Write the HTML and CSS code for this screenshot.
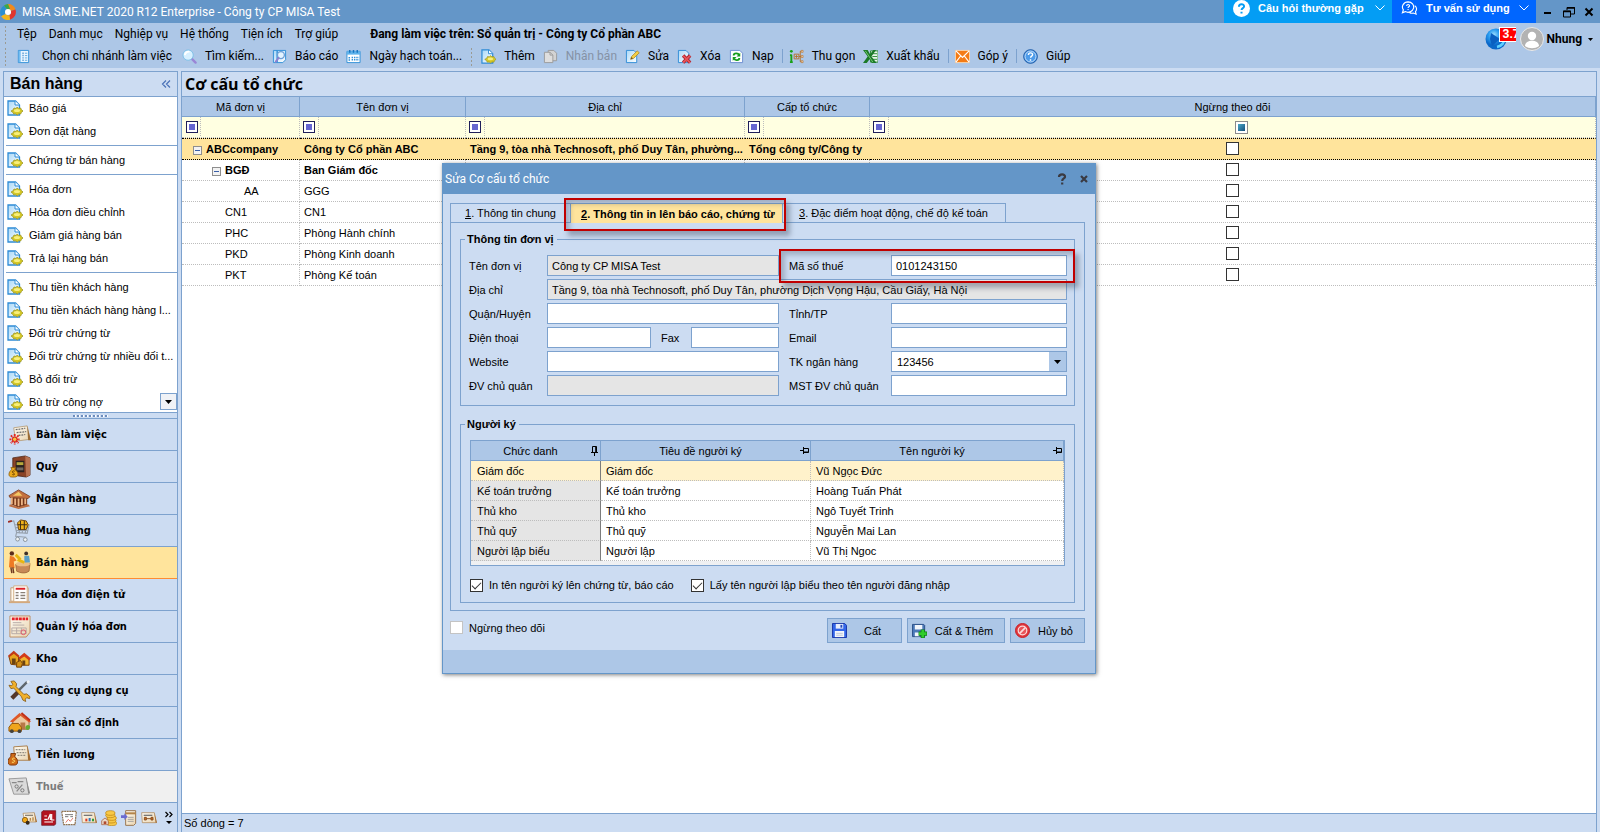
FILE: index.html
```html
<!DOCTYPE html>
<html lang="vi">
<head>
<meta charset="utf-8">
<title>MISA SME.NET 2020 R12 Enterprise - Công ty CP MISA Test</title>
<link rel="stylesheet" href="styles.css">
</head>
<body>
<svg class="defs" aria-hidden="true">
  <defs>
    <linearGradient id="page" x1="0" y1="0" x2="1" y2="1"><stop offset="0" stop-color="#a9d8f8"/><stop offset="1" stop-color="#fff"/></linearGradient>
    <radialGradient id="globe" cx=".4" cy=".3"><stop offset="0" stop-color="#9fe0ff"/><stop offset=".5" stop-color="#2a9cf0"/><stop offset="1" stop-color="#0a67c8"/></radialGradient>
    <linearGradient id="paper" x1="0" y1="0" x2="1" y2="1"><stop offset="0" stop-color="#fffdf6"/><stop offset="1" stop-color="#e9d3ae"/></linearGradient>
    <symbol id="logo" viewBox="0 0 16 16"><path d="M8 0a8 8 0 0 1 7.500 5.500L10.500 7A3 3 0 0 0 8 5L4 2.500A8 8 0 0 1 8 0z" fill="#f28a1c"/><path d="M15.500 5.500A8 8 0 0 1 10 15.700L9 11a3 3 0 0 0 1.800-4z" fill="#e0362f"/><path d="M10 15.700A8 8 0 0 1 1 12l5-2a3 3 0 0 0 3.500 1z" fill="#f2b61c"/><path d="M1 12A8 8 0 0 1 4 1.500L7 5a3 3 0 0 0-1.500 4.500z" fill="#2b8fd0"/><path d="M4 1.500A8 8 0 0 1 8 0l2 5-3 .2z" fill="#3aa94a"/><circle cx="8" cy="8" r="3" fill="#fff"/></symbol>
    <symbol id="doc" viewBox="0 0 16 16"><path d="M1 1h7.500l4 4v10H1z" fill="url(#page)" stroke="#2f8cd6" stroke-width="1.300"/><path d="M8 1v4h4.500" fill="#fff" stroke="#2f8cd6"/><path d="M4 11l2-1 1-2 2 .500L10.200 7l1.500 1.500 2-.500.600 1.500 1.700 1.500-1.700 1.500-.600 1.500-2-.200-1.500 1.200-1.500-1.200-2 .200-.700-1.500z" fill="#d5c825" stroke="#9c9528" stroke-width=".8"/><ellipse cx="10" cy="10.600" rx="3" ry="1.500" fill="#f8ef7c"/></symbol>
    <symbol id="book" viewBox="0 0 16 16"><path d="M2.500 1.500h11v13h-11z" fill="#e8f5ff" stroke="#2f8fd8"/><path d="M3 2h2v12H3z" fill="#74bdf0"/><path d="M7 4.500h1M7 7h1M7 9.500h1M7 12h1" stroke="#1673bf" stroke-width="1.500"/><path d="M9.500 4.500h2.500M9.500 7h2.500M9.500 9.500h2.500M9.500 12h2.500" stroke="#5fa9dc"/></symbol>
    <symbol id="find" viewBox="0 0 16 16"><path d="M10.500 10.500l4 4" stroke="#9a86d6" stroke-width="2.500" stroke-linecap="round"/><circle cx="6.500" cy="6.500" r="5.500" fill="#d7f0ff" stroke="#7bbfe6"/><path d="M3 6.500a4 4 0 0 1 5-3.500" stroke="#fff" stroke-width="2" fill="none"/></symbol>
    <symbol id="report" viewBox="0 0 16 16"><path d="M1.500 1.500h4v13h-4zM5.500 1.500h9v10l-3 3h-6z" fill="url(#page)" stroke="#2f8fd8"/><circle cx="9.500" cy="6.500" r="3.700" fill="#e4f4ff" stroke="#6d9fd6" stroke-width="1.400"/><path d="M7 9.500l-3 4" stroke="#8f80d0" stroke-width="2" stroke-linecap="round"/></symbol>
    <symbol id="cal" viewBox="0 0 16 16"><path d="M1 2.500h14v12H1z" fill="#fff" stroke="#2f8fd8"/><path d="M1 2.500h14v3.500H1z" fill="#5db3ec"/><path d="M4 1v3M8 1v3M12 1v3" stroke="#1673bf" stroke-width="1.500"/><path d="M3.500 8.500v4M6 9h8M6 11.500h8" stroke="#2f8fd8" stroke-width="1.600" stroke-dasharray="1.500 1"/></symbol>
    <symbol id="copy" viewBox="0 0 16 16"><path d="M5.500 1.500h6l3 3v8h-9z" fill="#d3d3d3" stroke="#9b9b9b"/><path d="M1.500 3.500h6l3 3v8h-9z" fill="#dedede" stroke="#9b9b9b"/><path d="M7.500 3.500v3h3" fill="none" stroke="#9b9b9b"/></symbol>
    <symbol id="edit" viewBox="0 0 16 16"><path d="M1.500 1.500h8l3 3v10h-11z" fill="url(#page)" stroke="#2f8cd6"/><path d="M6 11l1-3 6-6 2.200 2-6 6z" fill="#f5cf45" stroke="#a98620" stroke-width=".8"/><path d="M6 11l1-2.500 1.500 1.500z" fill="#6b4d1c"/></symbol>
    <symbol id="del" viewBox="0 0 16 16"><path d="M1.500 1.500h8l3 3v10h-11z" fill="url(#page)" stroke="#2f8cd6"/><path d="M6.500 7l7.500 7.500M14 7l-7.500 7.500" stroke="#a51f28" stroke-width="3.600"/><path d="M6.500 7l7.500 7.500M14 7l-7.500 7.500" stroke="#e8545c" stroke-width="2"/></symbol>
    <symbol id="reload" viewBox="0 0 16 16"><path d="M1.500 1.500h10l3 3v10h-13z" fill="#fbfdff" stroke="#6b8cd0"/><path d="M5 7c0-3 5-3 5.500-.5M11 9.500c0 3-5 3-5.500.5" fill="none" stroke="#169c1c" stroke-width="2"/><path d="M12 4v4H8zM4 12.500v-4h4z" fill="#169c1c"/></symbol>
    <symbol id="tree" viewBox="0 0 16 16"><path d="M2.500 6v8M1 6.500h2M1 14h3" stroke="#18a018" stroke-width="2"/><circle cx="2.500" cy="2.500" r="1.500" fill="#18a018"/><path d="M5.500 5.500h5v5h-5zM6.500 8h3M8 6.500v3M10.500 8H13M12 8V2.500h1.500M12 8v5.500h1.500" fill="none" stroke="#b5702a"/><path d="M13 1.500h2v2h-2zM13 7h2v2h-2zM13 12.500h2v2h-2z" fill="#f8e6c8" stroke="#b5702a" stroke-width=".7"/></symbol>
    <symbol id="excel" viewBox="0 0 16 16"><path d="M8 2h8v12H8z" fill="#e9f5e9" stroke="#2a8a36"/><path d="M10 5h5M10 8h5M10 11h5" stroke="#2a8a36"/><path d="M0 1h5l2.500 4.500L11 1h3L9 8l5.500 7h-5L7 11l-3 4H0l5-7z" fill="#1c7a28"/><path d="M2.500 2l8 12" stroke="#79cc74"/></symbol>
    <symbol id="mail" viewBox="0 0 16 16"><path d="M.5 1.500h15v13H.5z" fill="#f47b14" stroke="#fbd5ae"/><path d="M1 2l7 7 7-7M1 14l5-6.500M15 14l-5-6.500" fill="none" stroke="#fff" stroke-width="1.200"/></symbol>
    <symbol id="help" viewBox="0 0 16 16"><circle cx="8" cy="8" r="7.300" fill="#2a7ad0" stroke="#1a5aa8"/><circle cx="8" cy="8" r="5.900" fill="#4e9cea" stroke="#d6eaff"/><path d="M5.800 6.300c0-3 4.600-2.800 4.400-.2-.1 1.500-2.100 1.600-2.100 3.200M8 10.800v1.600" fill="none" stroke="#fff" stroke-width="1.500"/></symbol>
    <symbol id="ask" viewBox="0 0 16 16"><circle cx="8" cy="8" r="8" fill="#fff"/><path d="M5.600 6.300c0-3.200 5-3 4.800-.2-.1 1.600-2.300 1.600-2.300 3.300M8 11v1.800" fill="none" stroke="#049df4" stroke-width="1.900"/></symbol>
    <symbol id="chat" viewBox="0 0 18 16"><path d="M7.500 1a6 5.500 0 1 1-3 10.300L1.500 12.500l1-3A6 5.500 0 0 1 7.500 1zM14.500 5c2.500 2 2.500 4.500.8 6.300l.7 2.700-3-1.200c-1.500.5-3 .2-4-.5" fill="none" stroke="#fff" stroke-width="1.200"/><path d="M6 5.300c0-2 3.200-1.900 3-.1-.1 1-1.500 1-1.500 2.200M7.500 8.500v1.200" fill="none" stroke="#fff" stroke-width="1.200"/></symbol>
    <symbol id="down" viewBox="0 0 10 6"><path d="M.5.5L5 5 9.500.5" fill="none" stroke="currentColor"/></symbol>
    <symbol id="caret" viewBox="0 0 7 4"><path d="M0 0h7L3.500 4z" fill="currentColor"/></symbol>
    <symbol id="pin" viewBox="0 0 10 9"><path d="M0 4.500h3M3.500 1v7M3.500 2.500h5v4h-5M3.500 6h5" fill="none" stroke="#000"/></symbol>
    <symbol id="pinned" viewBox="0 0 9 10"><path d="M4.500 6.500V10M1 6.500h7M2.500 6V.5h4V6M5.700.5V6" fill="none" stroke="#000"/></symbol>

    <symbol id="desk" viewBox="0 0 24 24"><path d="M6 5l14-2 3 14-15 2z" fill="url(#paper)" stroke="#a98a5c" stroke-width=".7"/><path d="M20 3l4 15h-3z" fill="#9b6b35"/><path d="M8 7l10-1.500M9 10l10-1M11 13l7-1" stroke="#6a6a6a" stroke-width="1.300" stroke-dasharray="2 1"/><g stroke="#e3261f" stroke-width="1.900" stroke-dasharray="2 .600"><path d="M7 11.500v11M1.500 17h11M3 13l8 8M11 13l-8 8"/></g><circle cx="7" cy="17" r="2.300" fill="#f8c33c" stroke="#d1261f"/></symbol>
    <symbol id="safe" viewBox="0 0 24 24"><path d="M5 3l13-2 5 2v18l-4 2-14-2z" fill="#8a4326" stroke="#4d2413" stroke-width=".8"/><path d="M18 1l5 2v18l-4 2z" fill="#b87352"/><path d="M8 6h9v12H8z" fill="#2a2220"/><path d="M9 7.500h7v3H9z" fill="#b6a83c"/><path d="M9 13h7v3H9z" fill="#70675f"/><path d="M3 13h5l-1 2c5 3 4 8 0 8H4c-4 0-4-5 0-8z" fill="#eaa91e" stroke="#8b5b09" stroke-width=".8"/><path d="M7 17c-2-1.500-3.500 1-1.500 1.700s1.500 2.800-1 1.700" fill="none" stroke="#623b00"/></symbol>
    <symbol id="bank" viewBox="0 0 24 24"><path d="M1 9L11 3l12 7-2 2-19-1z" fill="#c4703f" stroke="#783515" stroke-width=".8"/><path d="M5 9l6-4 4 4z" fill="#f3c764"/><path d="M3 11l17 1v8L10 21 3 18z" fill="#743517"/><path d="M4 11v7M7.500 12v7M11 12v8M14.500 12v7M18 12v6" stroke="#edb485" stroke-width="1.900"/><path d="M2 18l9 3 10-3 2 2-12 3L1 20z" fill="#be6e42"/></symbol>
    <symbol id="cart" viewBox="0 0 24 24"><path d="M1 3l5-1 3 12 11 1 2-9H7M8 9h13M9 12h12M11 6l1 9M15 6v9M19 6l-1 9M9 14l-1 4 11 1" fill="none" stroke="#98a2ae" stroke-width="1.200"/><path d="M0 3l4-1" stroke="#a02c22" stroke-width="2"/><path d="M10 4l3-3 6 1 2 4-2 5h-8z" fill="#f0b21b" stroke="#70430b"/><path d="M13 2v9M17 2v9M10 6h10" stroke="#392815"/><circle cx="10" cy="21" r="2" fill="#eef2f5" stroke="#88929c"/><circle cx="18" cy="21.500" r="2" fill="#eef2f5" stroke="#88929c"/></symbol>
    <symbol id="sell" viewBox="0 0 24 24"><path d="M8 14l15-1-1 8c-4 3-9 2-13 0z" fill="#c78957" stroke="#925a2d" stroke-width=".7"/><ellipse cx="15.500" cy="13.500" rx="7.500" ry="2.500" fill="#ebbd83"/><circle cx="4" cy="2.500" r="2.300" fill="#5b2c1b"/><path d="M2 5l4 1 3 4-3 1 1 7-6-1z" fill="#ee7a24"/><path d="M5 17l1 6M3 17l1 6" stroke="#713a22" stroke-width="1.500"/><circle cx="19" cy="2.500" r="2" fill="#3f3027"/><path d="M17 5h5l1 7-6 0z" fill="#5a9fc8"/><path d="M8 4l5 5M10 9l7 3" stroke="#e7b610" stroke-width="3"/></symbol>
    <symbol id="einv" viewBox="0 0 24 24"><path d="M3 5h18v14H3z" fill="#fffaf0" stroke="#c79e72"/><path d="M6 3h14v17H6z" fill="#fff" stroke="#d0ad83"/><path d="M8 6h10" stroke="#dd1f25" stroke-width="2"/><path d="M8 10h3M13 10h5M8 13h3M13 13h5M8 16h3M13 16h5" stroke="#8a8177" stroke-width="1.400"/><path d="M1 19h22v2H1z" fill="#d4a97d"/></symbol>
    <symbol id="inv" viewBox="0 0 24 24"><path d="M2 1h21v17l-4 5H2z" fill="url(#paper)" stroke="#bd8d62"/><path d="M4 4h17" stroke="#e52127" stroke-width="3" stroke-dasharray="3 .7"/><path d="M5 8h9M5 10.500h12M4 13.500h15v6H4zM9 13.500v6M14 13.500v6M4 16.500h15" fill="none" stroke="#b7aaa6"/><circle cx="16" cy="18" r="2.500" fill="none" stroke="#e45869"/></symbol>
    <symbol id="store" viewBox="0 0 24 24"><path d="M1 10l5-4 5 4v9l-8-1z" fill="#e8a41e" stroke="#7a3e07"/><path d="M0 9l6-5 6 5-1 2-5-4-5 4z" fill="#c23b19"/><path d="M12 12l5-4 5 5v6h-9z" fill="#f0b42f" stroke="#7a3e07"/><path d="M11 11l6-5 7 6-2 2-5-4-5 3z" fill="#d33a1a"/><path d="M4 12h4v6H4zM15 14h3v5h-3z" fill="#6b4212"/><path d="M9 16l4-2 2 3-1 4H9z" fill="#d29018" stroke="#754005"/></symbol>
    <symbol id="tools" viewBox="0 0 24 24"><path d="M9 14L20 3" stroke="#5f666c" stroke-width="2.500"/><path d="M20 4l2-2" stroke="#eef1f4" stroke-width="2.500"/><path d="M4 20l6-6" stroke="#54372a" stroke-width="4.500"/><path d="M3 2.500l3.500-.5L9 5l-.5 3 8 8 3-.5L23 18.500l-.5 2-3-1-1.500 1.500.5 2.500-3-1.500-1.500-3.500-8-9-3 .5L1 6.500l3 .5 1-1.500z" fill="#f0b02c" stroke="#83550d" stroke-width=".8"/></symbol>
    <symbol id="asset" viewBox="0 0 24 24"><path d="M5 10L14 4l8 7v8H5z" fill="#ecc9a0" stroke="#a16540"/><path d="M2 11L12 2l12 9-2 1-9-7-8 7z" fill="#df5828"/><path d="M14 2l9 8" stroke="#c22e15" stroke-width="2"/><path d="M13 12h5v7h-5z" fill="#b97848"/><path d="M1 17l3-4h7l3 4v4H1z" fill="#efa51c" stroke="#91550a"/><circle cx="4" cy="21" r="2" fill="#44413c"/><circle cx="12" cy="21" r="2" fill="#44413c"/><path d="M18 18c0-5 6-4 5-1-1 3-3 4-5 1z" fill="#64ac30"/></symbol>
    <symbol id="pay" viewBox="0 0 24 24"><path d="M6 4l14-1 3 15H7z" fill="url(#paper)" stroke="#a97e4c"/><path d="M20 3l4 15h-3z" fill="#a46b2f"/><path d="M8 7h10M9 10h10M10 13h9" stroke="#918b80" stroke-width="1.300" stroke-dasharray="2 1"/><path d="M3 11h5l-1 3c4 3 4 9 0 9H3c-4 0-4-6 0-9z" fill="#cf6b18" stroke="#7d360a"/><path d="M7 16c-3-1-3 2-1 2s1 3-2 2" fill="none" stroke="#ffe06d"/></symbol>
    <symbol id="tax" viewBox="0 0 24 24"><path d="M1 4l18-1 3 17H6z" fill="#dadada" stroke="#999"/><path d="M19 3l4 16h-2z" fill="#8d8d8d"/><path d="M4 8h5M10 7h6M9 17l6-7" stroke="#888" stroke-width="1.300"/><circle cx="9" cy="12" r="1.700" fill="none" stroke="#777"/><circle cx="15" cy="16" r="1.700" fill="none" stroke="#777"/></symbol>
    <symbol id="costs" viewBox="0 0 24 24"><path d="M3 5l17-1 3 14H6z" fill="url(#paper)" stroke="#a97e4c"/><path d="M20 4l4 14h-2z" fill="#a46b2f"/><path d="M6 8h12" stroke="#8b8478" stroke-width="2"/><path d="M14 16v-4M18 16v-5" stroke="#b98a4a" stroke-width="2"/><circle cx="6" cy="15" r="4" fill="#f0a818" stroke="#6b4208"/><circle cx="10" cy="19" r="3" fill="#3a2a18"/></symbol>
    <symbol id="coins" viewBox="0 0 24 24"><g fill="#f8c845" stroke="#b9800f"><ellipse cx="16" cy="20" rx="7.500" ry="3.500"/><ellipse cx="15" cy="16" rx="7.500" ry="3.500"/><ellipse cx="16" cy="12" rx="7" ry="3.500"/><ellipse cx="14" cy="8" rx="7" ry="3.500"/><ellipse cx="14" cy="4.500" rx="7" ry="3.500"/></g><path d="M1 22v-6l5-4 5 4v6z" fill="#e9d9c8" stroke="#a3502a"/><path d="M4 17h4v4H4z" fill="#b04a2e"/></symbol>
    <symbol id="redbook" viewBox="0 0 24 24"><path d="M3 1h19v20l-2 2H1V3z" fill="#b31420" stroke="#67101a"/><path d="M5 9h4M5 14h4" stroke="#fff" stroke-width="1.800"/><path d="M10 15l4-9v9M16 6v9h4M5 18h13" fill="none" stroke="#fff" stroke-width="1.800"/></symbol>
    <symbol id="sheet" viewBox="0 0 24 24"><path d="M1 2h22l-2 20H4z" fill="#fff" stroke="#917452" stroke-width="1.800" stroke-dasharray="3 .8"/><path d="M6 7h12M6 10h5M14 10h4" stroke="#777" stroke-width="1.500"/><path d="M7 19l4-5 3 3 4-5" fill="none" stroke="#e07d72" stroke-width="1.500"/></symbol>
    <symbol id="chart" viewBox="0 0 24 24"><path d="M1 4h19l3 15H2z" fill="url(#paper)" stroke="#a97e4c"/><path d="M20 4l4 15h-2z" fill="#a46b2f"/><path d="M4 8h13" stroke="#777" stroke-width="2"/><path d="M8 17v-4" stroke="#dd3926" stroke-width="3"/><path d="M13 17v-5" stroke="#337ac0" stroke-width="3"/><path d="M18 17v-4" stroke="#2f9e40" stroke-width="3"/></symbol>
    <symbol id="scroll" viewBox="0 0 24 24"><path d="M7 1h15v19l-3 3H7z" fill="url(#paper)" stroke="#997650" stroke-width="1.500"/><path d="M7 5h15" stroke="#b3844a" stroke-width="3"/><path d="M10 11h9M10 14h9M10 17h9" stroke="#999" stroke-width="1.300"/><path d="M0 8h5V5l5 5-5 5v-3H0z" fill="#6a6ad0"/></symbol>
    <symbol id="merge" viewBox="0 0 24 24"><path d="M1 4h19l3 15H2z" fill="url(#paper)" stroke="#a97e4c"/><path d="M20 4l4 15h-2z" fill="#a46b2f"/><path d="M4 8h13" stroke="#777" stroke-width="2"/><path d="M5 11h3v4H5zM15 11h3v4h-3zM8 13h7" fill="#c0702c" stroke="#8a4b1c" stroke-width="1.400"/></symbol>
    <symbol id="save" viewBox="0 0 16 16"><path d="M.5.500h13l2 2v13H.5z" fill="#3366e8" stroke="#1533a8"/><path d="M4 1h8v5H4z" fill="#e8eefc"/><path d="M9 2h2v3H9z" fill="#2448b8"/><path d="M3 8.500h10V15H3z" fill="#f4f6fa"/><path d="M4.500 11h7M4.500 13h7" stroke="#b9c3d6"/></symbol>
    <symbol id="saveadd" viewBox="0 0 16 16"><path d="M.5 1.500h12l1 1v12H.5z" fill="#4b79b8" stroke="#2a4e86"/><path d="M3 2h8v5H3zM3 10h5v4H3z" fill="#f1f5fb"/><path d="M7 11.300h9M11.500 7v9" stroke="#0b7c12" stroke-width="4.400"/><path d="M7.500 11.300h8M11.500 7.500v8" stroke="#2fcc2c" stroke-width="2.900"/></symbol>
    <symbol id="cancel" viewBox="0 0 16 16"><circle cx="8" cy="8" r="7.500" fill="#e0363b" stroke="#c81d24"/><circle cx="8" cy="8" r="4.600" fill="#e8555a" stroke="#fbdcdc" stroke-width="1.300"/><path d="M5 11l6-6" stroke="#fbdcdc" stroke-width="1.800"/></symbol>
  </defs>
</svg>

<div class="app">
  <header class="titlebar">
    <svg class="logo"><use href="#logo"/></svg>
    <h1 class="window-title">MISA SME.NET 2020 R12 Enterprise - Công ty CP MISA Test</h1>
    <button class="promo promo-faq"><svg class="i17"><use href="#ask"/></svg><span>Câu hỏi thường gặp</span><svg class="chev"><use href="#down"/></svg></button>
    <button class="promo promo-chat"><svg class="i17"><use href="#chat"/></svg><span>Tư vấn sử dụng</span><svg class="chev"><use href="#down"/></svg></button>
    <div class="window-buttons">
      <button aria-label="Thu nhỏ"><svg class="i12" viewBox="0 0 12 12"><path d="M2 7h7" stroke="#000" stroke-width="2"/></svg></button>
      <button aria-label="Khôi phục"><svg class="i12" viewBox="0 0 12 12"><path d="M4 4V1.500h7.500V8H8M.5 5h7v6h-7z" fill="none" stroke="#000"/><path d="M4 2h8M0 5.500h8" stroke="#000" stroke-width="1.500"/></svg></button>
      <button aria-label="Đóng"><svg class="i12" viewBox="0 0 12 12"><path d="M2.500 2.500l7 7M9.500 2.500l-7 7" stroke="#000" stroke-width="2"/></svg></button>
    </div>
  </header>

  <div class="topbar">
    <div class="bars">
      <nav class="menubar">
        <i class="grip"></i>
        <button>Tệp</button><button>Danh mục</button><button>Nghiệp vụ</button><button>Hệ thống</button><button>Tiện ích</button><button>Trợ giúp</button>
        <strong class="context">Đang làm việc trên: Sổ quản trị - Công ty Cổ phần ABC</strong>
      </nav>
      <div class="toolbar">
        <i class="grip"></i>
        <button class="branch"><svg class="i15"><use href="#book"/></svg>Chọn chi nhánh làm việc</button>
        <button><svg class="i15"><use href="#find"/></svg>Tìm kiếm...</button>
        <button><svg class="i15"><use href="#report"/></svg>Báo cáo</button>
        <button><svg class="i15"><use href="#cal"/></svg>Ngày hạch toán...</button>
        <i class="grip"></i>
        <button><svg class="i15"><use href="#doc"/></svg>Thêm</button>
        <button disabled><svg class="i15"><use href="#copy"/></svg>Nhân bản</button>
        <button><svg class="i15"><use href="#edit"/></svg>Sửa</button>
        <button><svg class="i15"><use href="#del"/></svg>Xóa</button>
        <button><svg class="i15"><use href="#reload"/></svg>Nạp</button>
        <i class="rule"></i>
        <button><svg class="i15"><use href="#tree"/></svg>Thu gọn</button>
        <button><svg class="i15"><use href="#excel"/></svg>Xuất khẩu</button>
        <i class="rule"></i>
        <button><svg class="i15"><use href="#mail"/></svg>Góp ý</button>
        <i class="rule"></i>
        <button><svg class="i15"><use href="#help"/></svg>Giúp</button>
      </div>
    </div>
    <div class="account">
      <div class="news">
        <svg class="globe" viewBox="0 0 22 22"><circle cx="11" cy="11" r="10.500" fill="url(#globe)"/><path d="M6 5l9 6-8 7-2-7z" fill="#0a5fc0"/><path d="M12 19c5-1 8-5 7-9" stroke="#5fd0ff" stroke-width="2.500" fill="none"/></svg>
        <span class="badge">3.7</span>
      </div>
      <button class="user">
        <svg class="avatar" viewBox="0 0 24 24"><circle cx="12" cy="12" r="11.500" fill="#b3b3b3" stroke="#e9e9e9"/><circle cx="12" cy="9" r="4.200" fill="#fff"/><path d="M5 19c0-7 14-7 14 0-4 3-10 3-14 0z" fill="#fff"/></svg>
        Nhung<svg class="caret"><use href="#caret"/></svg>
      </button>
    </div>
  </div>

  <div class="workspace">
    <aside class="sidebar">
      <h2 class="side-title">Bán hàng<button class="collapse" aria-label="Thu gọn"><svg class="i10" viewBox="0 0 10 10"><path d="M5 1.500L1.500 5 5 8.500M9 1.500L5.500 5 9 8.500" fill="none" stroke="#4a72b8" stroke-width="1.200"/></svg></button></h2>
      <div class="side-list">
        <a href="#bao-gia"><svg class="i16"><use href="#doc"/></svg><span>Báo giá</span></a>
        <a href="#don-dat"><svg class="i16"><use href="#doc"/></svg><span>Đơn đặt hàng</span></a>
        <hr>
        <a href="#chung-tu"><svg class="i16"><use href="#doc"/></svg><span>Chứng từ bán hàng</span></a>
        <hr>
        <a href="#hoa-don"><svg class="i16"><use href="#doc"/></svg><span>Hóa đơn</span></a>
        <a href="#dieu-chinh"><svg class="i16"><use href="#doc"/></svg><span>Hóa đơn điều chỉnh</span></a>
        <a href="#giam-gia"><svg class="i16"><use href="#doc"/></svg><span>Giảm giá hàng bán</span></a>
        <a href="#tra-lai"><svg class="i16"><use href="#doc"/></svg><span>Trả lại hàng bán</span></a>
        <hr>
        <a href="#thu-tien"><svg class="i16"><use href="#doc"/></svg><span>Thu tiền khách hàng</span></a>
        <a href="#thu-tien-loat"><svg class="i16"><use href="#doc"/></svg><span>Thu tiền khách hàng hàng l...</span></a>
        <a href="#doi-tru"><svg class="i16"><use href="#doc"/></svg><span>Đối trừ chứng từ</span></a>
        <a href="#doi-tru-nhieu"><svg class="i16"><use href="#doc"/></svg><span>Đối trừ chứng từ nhiều đối t...</span></a>
        <a href="#bo-doi-tru"><svg class="i16"><use href="#doc"/></svg><span>Bỏ đối trừ</span></a>
        <a href="#bu-tru"><svg class="i16"><use href="#doc"/></svg><span>Bù trừ công nợ</span></a>
        <button class="scroll-down" aria-label="Cuộn xuống"><svg class="caret"><use href="#caret"/></svg></button>
      </div>
      <div class="splitter"><i></i></div>
      <nav class="modules">
        <button><svg class="i23"><use href="#desk"/></svg>Bàn làm việc</button>
        <button><svg class="i23"><use href="#safe"/></svg>Quỹ</button>
        <button><svg class="i23"><use href="#bank"/></svg>Ngân hàng</button>
        <button><svg class="i23"><use href="#cart"/></svg>Mua hàng</button>
        <button class="active"><svg class="i23"><use href="#sell"/></svg>Bán hàng</button>
        <button><svg class="i23"><use href="#einv"/></svg>Hóa đơn điện tử</button>
        <button><svg class="i23"><use href="#inv"/></svg>Quản lý hóa đơn</button>
        <button><svg class="i23"><use href="#store"/></svg>Kho</button>
        <button><svg class="i23"><use href="#tools"/></svg>Công cụ dụng cụ</button>
        <button><svg class="i23"><use href="#asset"/></svg>Tài sản cố định</button>
        <button><svg class="i23"><use href="#pay"/></svg>Tiền lương</button>
        <button disabled><svg class="i23"><use href="#tax"/></svg>Thuế</button>
      </nav>
      <div class="shortcuts">
        <button aria-label="Giá thành"><svg class="i16"><use href="#costs"/></svg></button>
        <button aria-label="Sổ cái"><svg class="i16"><use href="#redbook"/></svg></button>
        <button aria-label="Hợp đồng"><svg class="i16"><use href="#sheet"/></svg></button>
        <button aria-label="Báo cáo"><svg class="i16"><use href="#chart"/></svg></button>
        <button aria-label="Ngân sách"><svg class="i16"><use href="#coins"/></svg></button>
        <button aria-label="Tài liệu"><svg class="i16"><use href="#scroll"/></svg></button>
        <button aria-label="Tổng hợp"><svg class="i16"><use href="#merge"/></svg></button>
        <button class="more" aria-label="Thêm mục"><svg viewBox="0 0 8 14"><path d="M.5 1l2.500 2.500L.5 6M4.500 1L7 3.500 4.500 6" fill="none" stroke="#000" stroke-width="1.200"/><path d="M1 10h6l-3 3z"/></svg></button>
      </div>
    </aside>

    <main class="content">
      <h2 class="page-title">Cơ cấu tổ chức</h2>
      <div class="grid-wrap">
        <table class="grid">
          <colgroup><col class="c-code"><col class="c-name"><col class="c-addr"><col class="c-level"><col></colgroup>
          <thead>
            <tr><th>Mã đơn vị</th><th>Tên đơn vị</th><th>Địa chỉ</th><th>Cấp tổ chức</th><th>Ngừng theo dõi</th></tr>
            <tr class="filters">
              <td><button class="op" aria-label="Lọc mã"></button></td><td><button class="op" aria-label="Lọc tên"></button></td><td><button class="op" aria-label="Lọc địa chỉ"></button></td><td><button class="op" aria-label="Lọc cấp"></button></td>
              <td><div class="tri-cell"><button class="op" aria-label="Lọc trạng thái"></button><span><input type="checkbox" class="tri" aria-label="Ngừng theo dõi"></span></div></td>
            </tr>
          </thead>
          <tbody>
            <tr class="selected strong"><td class="l0"><button class="minus" aria-label="Thu gọn"></button>ABCcompany</td><td>Công ty Cổ phần ABC</td><td>Tầng 9, tòa nhà Technosoft, phố Duy Tân, phường...</td><td>Tổng công ty/Công ty</td><td class="mid"><input type="checkbox" aria-label="ABCcompany"></td></tr>
            <tr class="strong"><td class="l1"><button class="minus" aria-label="Thu gọn"></button>BGĐ</td><td>Ban Giám đốc</td><td></td><td></td><td class="mid"><input type="checkbox" aria-label="BGĐ"></td></tr>
            <tr><td class="l3">AA</td><td>GGG</td><td></td><td></td><td class="mid"><input type="checkbox" aria-label="AA"></td></tr>
            <tr><td class="l2">CN1</td><td>CN1</td><td></td><td></td><td class="mid"><input type="checkbox" aria-label="CN1"></td></tr>
            <tr><td class="l2">PHC</td><td>Phòng Hành chính</td><td></td><td></td><td class="mid"><input type="checkbox" aria-label="PHC"></td></tr>
            <tr><td class="l2">PKD</td><td>Phòng Kinh doanh</td><td></td><td></td><td class="mid"><input type="checkbox" aria-label="PKD"></td></tr>
            <tr><td class="l2">PKT</td><td>Phòng Kế toán</td><td></td><td></td><td class="mid"><input type="checkbox" aria-label="PKT"></td></tr>
          </tbody>
        </table>
      </div>
      <footer class="status">Số dòng = 7</footer>
    </main>
  </div>
</div>

<section class="dialog" role="dialog" aria-labelledby="dlg-title">
  <header class="dlg-head">
    <h3 id="dlg-title">Sửa Cơ cấu tổ chức</h3>
    <button class="dlg-help" aria-label="Trợ giúp"><svg class="i12" viewBox="0 0 12 12"><path d="M3 4c0-3.500 6.500-3.500 6 0C8.800 5.500 6.200 5.500 6.200 8M6.200 9.500v2" fill="none" stroke="#3a3a42" stroke-width="2.200"/></svg></button>
    <button aria-label="Đóng"><svg class="i12" viewBox="0 0 12 12"><path d="M3 3l6 6M9 3l-6 6" stroke="#3a3a42" stroke-width="2.200"/></svg></button>
  </header>
  <form class="dlg-body">
    <div class="tabs" role="tablist">
      <button type="button" role="tab"><span><u>1</u>. Thông tin chung</span></button>
      <button type="button" role="tab" class="current" aria-selected="true"><span><u>2</u>. Thông tin in lên báo cáo, chứng từ</span></button>
      <button type="button" role="tab"><span><u>3</u>. Đặc điểm hoạt động, chế độ kế toán</span></button>
      <i class="mark mark-tab"></i>
    </div>
    <div class="panel">
      <fieldset>
        <legend>Thông tin đơn vị</legend>
        <div class="fields">
          <label for="ten">Tên đơn vị</label><input id="ten" value="Công ty CP MISA Test" readonly>
          <label class="second" for="mst">Mã số thuế</label><input id="mst" value="0101243150">
          <label for="dc">Địa chỉ</label><input id="dc" class="span" value="Tầng 9, tòa nhà Technosoft, phố Duy Tân, phường Dịch Vọng Hậu, Cầu Giấy, Hà Nội" readonly>
          <label for="quan">Quận/Huyện</label><input id="quan">
          <label class="second" for="tinh">Tỉnh/TP</label><input id="tinh">
          <label for="dt">Điện thoại</label>
          <div class="phone"><input id="dt"><label class="second" for="fax">Fax</label><input id="fax"></div>
          <label class="second" for="email">Email</label><input id="email">
          <label for="web">Website</label><input id="web">
          <label class="second" for="tk">TK ngân hàng</label>
          <div class="combo"><select id="tk"><option>123456</option></select><i><svg class="caret"><use href="#caret"/></svg></i></div>
          <label for="dv">ĐV chủ quản</label><input id="dv" readonly>
          <label class="second" for="mstdv">MST ĐV chủ quản</label><input id="mstdv">
          <i class="mark mark-tax"></i>
        </div>
      </fieldset>
      <fieldset class="signers">
        <legend>Người ký</legend>
        <div class="sign-wrap">
          <table class="sign">
            <colgroup><col class="s-role"><col class="s-title"><col></colgroup>
            <thead><tr><th><div>Chức danh<svg class="pinned"><use href="#pinned"/></svg></div></th><th><div>Tiêu đề người ký<svg class="pin"><use href="#pin"/></svg></div></th><th><div>Tên người ký<svg class="pin"><use href="#pin"/></svg></div></th></tr></thead>
            <tbody>
              <tr class="on"><td>Giám đốc</td><td>Giám đốc</td><td>Vũ Ngọc Đức</td></tr>
              <tr><td>Kế toán trưởng</td><td>Kế toán trưởng</td><td>Hoàng Tuấn Phát</td></tr>
              <tr><td>Thủ kho</td><td>Thủ kho</td><td>Ngô Tuyết Trinh</td></tr>
              <tr><td>Thủ quỹ</td><td>Thủ quỹ</td><td>Nguyễn Mai Lan</td></tr>
              <tr><td>Người lập biểu</td><td>Người lập</td><td>Vũ Thị Ngoc</td></tr>
            </tbody>
          </table>
        </div>
        <div class="checks">
          <label><input type="checkbox" checked>In tên người ký lên chứng từ, báo cáo</label>
          <label><input type="checkbox" checked>Lấy tên người lập biểu theo tên người đăng nhập</label>
        </div>
      </fieldset>
    </div>
    <div class="actions">
      <label class="stop"><input type="checkbox" class="pale">Ngừng theo dõi</label>
      <button type="button" class="btn"><svg class="i15"><use href="#save"/></svg><span>Cất</span></button>
      <button type="button" class="btn wide"><svg class="i15"><use href="#saveadd"/></svg><span>Cất &amp; Thêm</span></button>
      <button type="button" class="btn"><svg class="i15"><use href="#cancel"/></svg><span>Hủy bỏ</span></button>
    </div>
  </form>
  <div class="dlg-foot"></div>
</section>
</body>
</html>
```

FILE: styles.css
```css
:root {
  --title: #6496c8;
  --bar: #adc7e7;
  --pane: #ccdcf2;
  --line: #7da2ce;
  --gold: #ffe49c;
  --sans: "Liberation Sans", Arial, sans-serif;
  --ui: Roboto, "Open Sans", sans-serif;
  --head: "Open Sans", "Noto Sans", sans-serif;
}
* { box-sizing: border-box; }
body { margin: 0; font: 11px/16px var(--sans); color: #000; background: var(--pane); }
button { font: inherit; color: inherit; background: none; border: 0; padding: 0; text-align: left; white-space: nowrap; }
h1, h2, h3 { margin: 0; }
a { color: inherit; text-decoration: none; }
svg { display: block; flex: none; }
.defs { position: absolute; width: 0; height: 0; }
.i10 { width: 10px; height: 10px; }
.i12 { width: 12px; height: 12px; }
.i15 { width: 15px; height: 15px; }
.i16 { width: 16px; height: 16px; }
.i17 { width: 17px; height: 17px; }
.i23 { width: 23px; height: 23px; }
.caret { width: 7px; height: 4px; }

.app { height: 100vh; display: flex; flex-direction: column; }

/* Title bar */
.titlebar { height: 23px; flex: none; display: flex; align-items: center; background: var(--title); color: #fff; }
.logo { width: 16px; height: 16px; }
.window-title { flex: 1; margin-left: 6px; font: 12px/16px var(--ui); }
.promo { height: 23px; display: flex; align-items: center; padding: 0 7px 7px 9px; font-weight: bold; }
.promo span { flex: 1; padding-left: 8px; }
.promo-faq { width: 168px; background: #049df4; }
.promo-chat { width: 144px; background: #0066ff; }
.chev { width: 10px; height: 6px; }
.window-buttons { width: 64px; display: flex; justify-content: space-between; padding: 0 5px 0 6px; }

/* Menu and tool bars */
.topbar { height: 45px; flex: none; display: flex; justify-content: space-between; background: var(--bar); }
.bars { font: 12px/16px var(--ui); }
.menubar, .toolbar { display: flex; align-items: center; padding-left: 4px; }
.menubar { height: 22px; gap: 12px; }
.toolbar { height: 22px; gap: 8px; }
.toolbar button { display: flex; align-items: center; gap: 8px; }
.toolbar button:disabled { color: #8592a5; }
.toolbar .branch { gap: 11px; padding: 0 2px 0 1px; }
.grip { width: 3px; height: 19px; background: radial-gradient(circle, #9a9a94 1px, transparent 1px) 0 0 / 3px 4px; }
.menubar .grip { margin-right: -2px; }
.rule { width: 1px; height: 14px; background: var(--line); margin: 0 -2px 0 0; }
.context { margin-left: 20px; }
.account { display: flex; align-items: flex-start; gap: 4px; padding: 4px 7px 0 0; font: bold 12px/16px var(--ui); }
.news { position: relative; width: 31px; height: 24px; padding-top: 1px; overflow: hidden; }
.globe { width: 22px; height: 22px; }
.badge { position: absolute; left: 14px; top: 0; width: 24px; height: 15px; background: #f00; border: 1px solid #fff; color: #fff; font: bold 12px/13px var(--ui); padding-left: 3px; }
.user { display: flex; align-items: center; gap: 3px; }
.avatar { width: 24px; height: 24px; }
.user .caret { width: 5px; height: 3px; margin-left: 3px; }

/* Workspace */
.workspace { flex: 1; min-height: 0; display: flex; gap: 3px; padding: 3px 3px 0; }
.sidebar { width: 175px; flex: none; display: flex; flex-direction: column; border: 1px solid var(--line); border-bottom: 0; }
.side-title { display: flex; align-items: center; justify-content: space-between; height: 25px; flex: none; padding: 0 6px; border-bottom: 1px solid var(--line); font: bold 16px/24px var(--sans); }
.side-list { position: relative; flex: 1; min-height: 0; overflow: hidden; background: #fff; }
.side-list a { display: flex; align-items: center; gap: 6px; height: 23px; padding: 0 3px 2px 3px; }
.side-list a span { white-space: nowrap; }
.side-list hr { height: 1px; margin: 2px 0 3px 2px; border: 0; background: var(--line); }
.scroll-down { position: absolute; right: 0; bottom: 2px; width: 17px; height: 17px; display: grid; place-items: center; background: #f0f2f6; border: 1px solid var(--line); }
.splitter { height: 6px; flex: none; display: flex; justify-content: center; align-items: center; border-top: 1px solid var(--line); }
.splitter i { width: 35px; height: 2px; background: repeating-linear-gradient(90deg, #6d8dbd 0 2px, #fff 2px 3px, var(--pane) 3px 4px); }
.modules { flex: none; border-bottom: 1px solid var(--line); font: bold 11px/16px "DejaVu Sans Condensed", "DejaVu Sans", sans-serif; }
.modules button { display: flex; align-items: center; gap: 5px; width: 100%; height: 32px; padding-left: 4px; border-top: 1px solid var(--line); }
.modules button.active { background: var(--gold); }
.modules button.active + button { border-top-color: #ff8c32; }
.modules button:disabled { background: #f0f0f0; color: #7b7b7b; }
.shortcuts { height: 29px; flex: none; display: flex; align-items: center; gap: 4px; padding-left: 17px; }
.more { margin-left: 4px; width: 8px; }

/* Organisation grid */
.content { flex: 1; min-width: 0; display: flex; flex-direction: column; border: 1px solid var(--line); border-bottom: 0; }
.page-title { height: 25px; flex: none; padding-left: 3px; border-bottom: 1px solid var(--line); font: bold 16px/24px var(--head); }
.grid-wrap { flex: 1; min-height: 0; background: #fff; }
.grid { width: 100%; table-layout: fixed; border-collapse: separate; border-spacing: 0; }
.c-code { width: 118px; }
.c-name { width: 166px; }
.c-addr { width: 279px; }
.c-level { width: 125px; }
.grid th { height: 20px; padding: 0; font-weight: normal; background: var(--bar); border: solid var(--line); border-width: 0 1px 1px 0; }
.grid td { height: 21px; padding: 0 4px; white-space: nowrap; overflow: hidden; border: dotted #bdbdbd; border-width: 0 1px 1px 0; }
.grid .filters td { padding: 0 3px; background: repeating-linear-gradient(#bdbdbd 0 1px, transparent 1px 2px) 18px 0 / 1px 100% no-repeat #ffffe1; }
.grid .filters td:first-child { padding-left: 4px; }
.op { display: block; width: 12px; height: 12px; border: 1px solid #1f1f5a; background: #6666d0; box-shadow: inset 0 0 0 2px #fff; }
.tri-cell { display: flex; align-items: center; }
.tri-cell span { flex: 1; display: flex; justify-content: center; padding-left: 6px; }
.grid .mid { text-align: center; }
.grid .l0 { padding-left: 11px; }
.grid .l1 { padding-left: 30px; }
.grid .l2 { padding-left: 43px; }
.grid .l3 { padding-left: 62px; }
.strong { font-weight: bold; }
.grid .selected td { height: 22px; background: var(--gold); border-top: 1px dotted #000; border-bottom: 1px dotted #000; border-right-color: transparent; }
.minus { display: inline-block; vertical-align: -1px; width: 9px; height: 9px; margin-right: 4px; border: 1px solid #8e8e8e; background: linear-gradient(#3a5fa8, #3a5fa8) 1px 3px / 5px 1px no-repeat #f2f2f2; }
input[type="checkbox"] { appearance: none; display: inline-grid; place-items: center; vertical-align: middle; width: 13px; height: 13px; margin: 0; border: 1px solid #333; background: #fff; flex: none; }
.mid input[type="checkbox"] { vertical-align: -2px; }
input[type="checkbox"]:checked::after { content: ""; width: 8px; height: 4px; margin-bottom: 2px; border: solid #333; border-width: 0 0 1px 1px; transform: rotate(-45deg); }
input.tri { border-color: #8b8b8b; background: linear-gradient(135deg, #4aa8c8, #17507c) 2px 2px / 7px 7px no-repeat #fff; }
input.pale { border-color: #c4c4c4; }
.status { height: 19px; flex: none; padding-left: 2px; line-height: 19px; border-top: 1px solid var(--line); background: var(--pane); }

/* Dialog */
.dialog { position: absolute; left: 442px; top: 163px; width: 654px; background: var(--pane); border: 1px solid var(--title); box-shadow: 1px 1px 4px rgba(0, 0, 0, .5); }
.dlg-head { height: 30px; display: flex; align-items: center; gap: 10px; padding: 0 5px 1px 2px; background: var(--title); color: #fff; }
.dlg-head h3 { flex: 1; font: 12px/16px var(--ui); }
.dlg-body { padding: 9px 10px 7px 7px; }
.tabs { position: relative; display: flex; height: 20px; }
.tabs button { height: 19px; padding: 0 14px; border: 1px solid var(--line); border-bottom: 0; border-left: 0; }
.tabs button:first-child { width: 121px; border-left: 1px solid var(--line); }
.tabs button:nth-child(3) { width: 223px; padding-left: 16px; }
.tabs .current { width: 212px; height: 20px; padding: 0 10px; background: var(--gold); font-weight: bold; }
.mark { position: absolute; border: 2px solid #c00000; box-shadow: 4px 5px 5px rgba(60, 70, 90, .4), inset 4px 4px 5px rgba(60, 70, 90, .3); pointer-events: none; }
.mark-tab { left: 114px; top: -5px; width: 222px; height: 33px; }
.mark-tax { right: -8px; top: -6px; width: 296px; height: 34px; }
.panel { border: 1px solid var(--line); margin-top: -1px; padding: 8px 9px 7px; }
fieldset { margin: 0; border: 1px solid var(--line); padding: 8px 7px 9px 8px; min-width: 0; }
legend { padding: 0 3px 0 2px; margin-left: -4px; font-weight: bold; }
.fields { position: relative; display: grid; grid-template-columns: 78px 232px 1fr 176px; row-gap: 3px; align-items: center; }
.fields label { white-space: nowrap; }
.fields .second { padding-left: 10px; }
.fields .span { grid-column: 2 / -1; }
.fields input, .fields select { width: 100%; min-width: 0; height: 21px; border: 1px solid var(--line); border-radius: 0; background: #fff; font: inherit; color: #000; padding: 0 4px; outline: 0; }
.fields input[readonly] { background: #e5e5e5; }
.phone { display: grid; grid-template-columns: 104px 40px 88px; align-items: center; }
.combo { position: relative; }
.combo select { appearance: none; display: block; padding-left: 5px; }
.combo i { position: absolute; right: 1px; top: 1px; width: 17px; height: 19px; display: grid; place-items: center; background: var(--bar); pointer-events: none; }
.signers { margin-top: 10px; padding-top: 5px; }
.sign-wrap { width: 595px; padding-bottom: 4px; border: 1px solid var(--line); background: #eff0f2; margin: 3px 0 0 1px; }
.sign { width: 100%; table-layout: fixed; border-spacing: 0; }
.s-role { width: 130px; }
.s-title { width: 210px; }
.sign th { height: 20px; padding: 0; font-weight: normal; background: var(--bar); border: solid var(--line); border-width: 0 1px 1px 0; }
.sign th div { position: relative; padding-right: 10px; }
.pin, .pinned { position: absolute; right: 0; top: 3px; width: 10px; height: 9px; }
.pinned { width: 9px; height: 10px; right: 1px; }
.sign td { height: 20px; padding: 0 5px; background: #fff; border: dotted #bdbdbd; border-width: 0 1px 1px 0; }
.sign td:first-child { padding-left: 6px; background: #e5e5e5; border-right: 1px solid #7c7c7c; }
.sign .on td, .sign .on td:first-child { background: #fff2cb; }
.checks { display: flex; gap: 17px; margin-top: 11px; padding-left: 1px; }
.checks label, .stop { display: flex; align-items: center; gap: 6px; }
.actions { display: flex; gap: 5px; margin-top: 7px; }
.stop { margin-right: auto; height: 19px; }
.btn { width: 75px; height: 25px; display: flex; align-items: center; padding: 0 3px 0 4px; border: 1px solid var(--line); background: var(--bar); }
.btn span { flex: 1; text-align: center; }
.btn.wide { width: 98px; }
.dlg-foot { height: 23px; background: var(--bar); }
```
